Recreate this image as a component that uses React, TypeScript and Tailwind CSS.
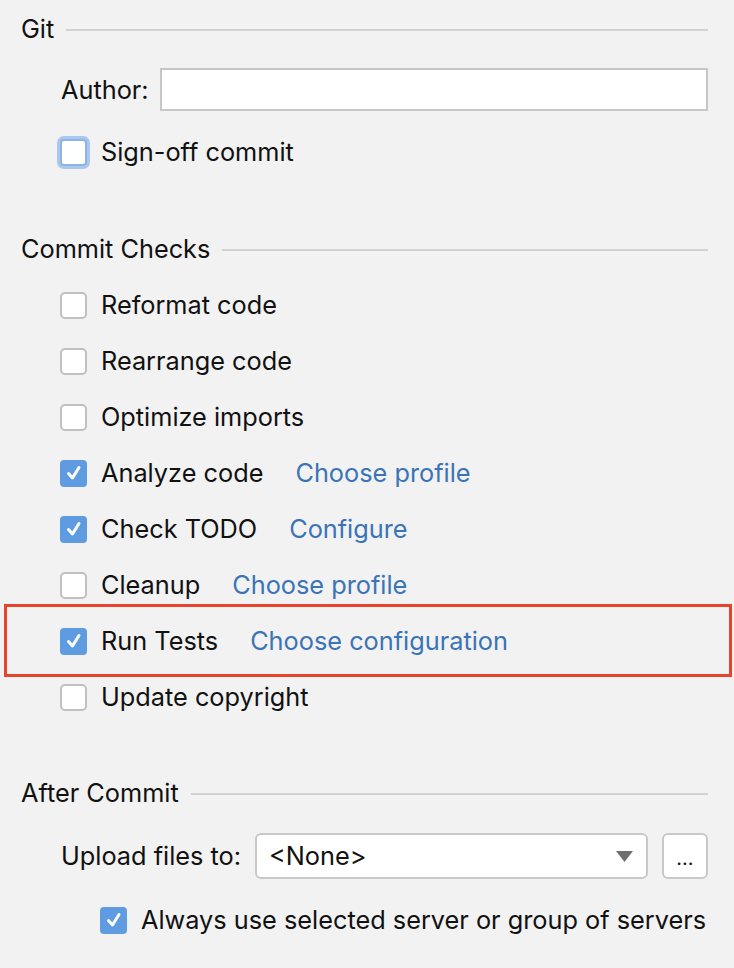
import React from "react";

const font = { fontFamily: "Inter, 'Noto Sans', sans-serif" };

function Check({ checked, focused }: { checked?: boolean; focused?: boolean }) {
  if (checked) {
    return (
      <div className="w-[27px] h-[27px] rounded-[4px] bg-[#5f9be0] flex items-center justify-center shrink-0">
        <svg width="18" height="18" viewBox="0 0 18 18">
          <path d="M3.5 9.5 L7.5 14 L14 3.5" fill="none" stroke="white" strokeWidth="3" strokeLinecap="round" strokeLinejoin="round" />
        </svg>
      </div>
    );
  }
  if (focused) {
    return (
      <div className="w-[27px] h-[27px] rounded-[4px] bg-white border-2 border-[#8fb3e3] ring-[3px] ring-[#a9c8ef] shrink-0" />
    );
  }
  return <div className="w-[27px] h-[27px] rounded-[5px] bg-white border-2 border-[#c0c0c0] shrink-0" />;
}

function SectionTitle({ title }: { title: string }) {
  return (
    <div className="h-[56px] flex items-center pl-[21px] pr-[26px]">
      <span className="text-[25.3px] text-[#111]">{title}</span>
      <div className="flex-1 h-[2px] bg-[#d2d2d2] ml-[12px] mt-[1px]" />
    </div>
  );
}

function Row({ label, checked, link, focused }: { label: string; checked?: boolean; link?: string; focused?: boolean }) {
  return (
    <div className="h-[56px] flex items-center pl-[60px]">
      <Check checked={checked} focused={focused} />
      <span className="ml-[14px] text-[25.3px] text-[#111]">{label}</span>
      {link && <span className="ml-[32px] text-[25.3px] text-[#3b74b6]">{link}</span>}
    </div>
  );
}

export default function App() {
  return (
    <div className="w-[734px] h-[968px] bg-[#f2f2f2] pt-[1px] overflow-hidden" style={font}>
      <SectionTitle title="Git" />
      <div className="mt-[11px] flex items-center pl-[61px] pr-[26px]">
        <span className="text-[25.3px] text-[#111] w-[99px]">Author:</span>
        <div className="flex-1 h-[43px] bg-white border-2 border-[#c6c6c6]" />
      </div>
      <div className="mt-[13px]">
        <Row label="Sign-off commit" focused />
      </div>
      <div className="mt-[41px]">
        <SectionTitle title="Commit Checks" />
      </div>
      <Row label="Reformat code" />
      <Row label="Rearrange code" />
      <Row label="Optimize imports" />
      <Row label="Analyze code" checked link="Choose profile" />
      <Row label="Check TODO" checked link="Configure" />
      <Row label="Cleanup" link="Choose profile" />
      <div className="relative">
        <Row label="Run Tests" checked link="Choose configuration" />
        <div className="absolute left-[4px] right-[2px] top-[-9px] bottom-[-8px] border-[3px] border-[#e8432c] pointer-events-none" />
      </div>
      <Row label="Update copyright" />
      <div className="mt-[40px]">
        <SectionTitle title="After Commit" />
      </div>
      <div className="mt-[12px] flex items-center pl-[61px] pr-[26px]">
        <span className="text-[25.3px] text-[#111] w-[194px]">Upload files to:</span>
        <div className="flex-1 h-[46px] bg-white border-2 border-[#c8c8c8] rounded-[6px] flex items-center pl-[12px] pr-[13px]">
          <span className="text-[25.3px] text-[#111] flex-1">&lt;None&gt;</span>
          <svg width="17" height="11" viewBox="0 0 17 11">
            <path d="M0 0 L17 0 L8.5 11 Z" fill="#6f6f6f" />
          </svg>
        </div>
        <div className="ml-[14px] w-[46px] h-[46px] bg-white border-2 border-[#c8c8c8] rounded-[6px] flex items-center justify-center">
          <span className="text-[20px] text-[#111] leading-none mt-[4px]">...</span>
        </div>
      </div>
      <div className="mt-[13px] h-[56px] flex items-center pl-[100px]">
        <Check checked />
        <span className="ml-[14px] text-[25.3px] text-[#111]">Always use selected server or group of servers</span>
      </div>
    </div>
  );
}
